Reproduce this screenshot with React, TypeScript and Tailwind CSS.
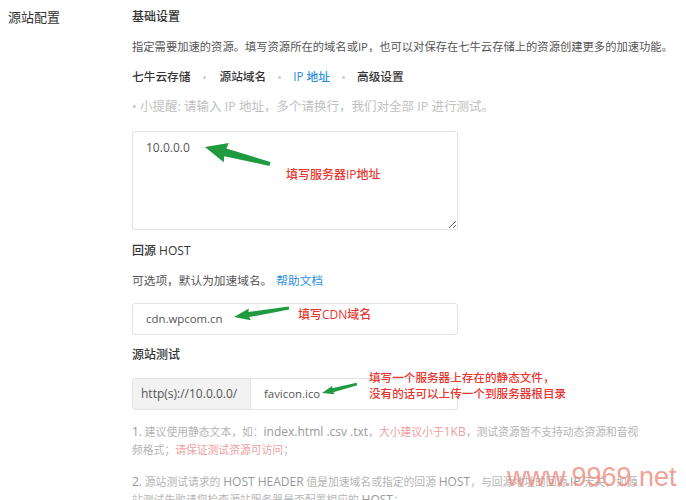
import React from "react";

const F = { fontFamily: '"Open Sans", "Noto Sans CJK SC", sans-serif' };

function Arrow({ tip, tail, headLen, headW, w0, w1 }: { tip: [number, number]; tail: [number, number]; headLen: number; headW: number; w0: number; w1: number }) {
  const dx = tail[0] - tip[0];
  const dy = tail[1] - tip[1];
  const L = Math.hypot(dx, dy);
  const ux = dx / L, uy = dy / L;
  const px = -uy, py = ux;
  const bx = tip[0] + ux * headLen, by = tip[1] + uy * headLen;
  const pts = [
    [tip[0], tip[1]],
    [bx + px * headW, by + py * headW],
    [bx + px * w0 - ux, by + py * w0 - uy],
    [tail[0] + px * w1, tail[1] + py * w1],
    [tail[0] - px * w1, tail[1] - py * w1],
    [bx - px * w0 - ux, by - py * w0 - uy],
    [bx - px * headW, by - py * headW],
  ];
  return <polygon points={pts.map((p) => p.join(",")).join(" ")} fill="#1f9a3e" />;
}

export default function App() {
  return (
    <div className="relative w-[686px] h-[500px] overflow-hidden bg-white flex items-start text-[#333]" style={F}>
      <div className="w-[132px] shrink-0 pl-[8px] pt-[5px] text-[13px] leading-[24px] text-[#333]">源站配置</div>
      <div className="flex-1 pt-[2px] pr-[4px]">
        <div className="h-[30px] flex items-center text-[12px] font-medium text-[#333]">基础设置</div>
        <div className="h-[30px] flex items-center text-[11.3px] text-[#555] whitespace-nowrap">指定需要加速的资源。填写资源所在的域名或IP，也可以对保存在七牛云存储上的资源创建更多的加速功能。</div>
        <div className="h-[30px] flex items-center text-[11.7px] font-medium text-[#333]">
          <span>七牛云存储</span>
          <span className="mx-[13px] w-[3px] h-[3px] rounded-full bg-[#ccc]" />
          <span>源站域名</span>
          <span className="mx-[12px] w-[3px] h-[3px] rounded-full bg-[#ccc]" />
          <span className="text-[#2a8ee0]">IP 地址</span>
          <span className="mx-[12px] w-[3px] h-[3px] rounded-full bg-[#ccc]" />
          <span>高级设置</span>
        </div>
        <div className="h-[31px] flex items-center text-[12.5px] text-[#c0c0c0] whitespace-nowrap">• 小提醒: 请输入 IP 地址，多个请换行，我们对全部 IP 进行测试。</div>
        <textarea
          readOnly
          defaultValue="10.0.0.0"
          className="block mt-[8px] w-[326px] h-[99px] border border-[#e3e3e3] rounded-[3px] px-[13px] pt-[7px] text-[12px] leading-[18px] text-[#555] outline-none"
          style={F}
        />
        <div className="mt-[6px] h-[30px] flex items-center text-[12px] font-medium text-[#333]">回源 HOST</div>
        <div className="h-[30px] flex items-center text-[11.7px] text-[#555]">
          可选项，默认为加速域名。<span className="ml-[4px] text-[#2a8ee0]">帮助文档</span>
        </div>
        <div className="mt-[7px] w-[326px] h-[32px] border border-[#e3e3e3] rounded-[3px] flex items-center px-[13px] text-[11.4px] text-[#555]">cdn.wpcom.cn</div>
        <div className="mt-[5px] h-[30px] flex items-center text-[12px] font-medium text-[#333]">源站测试</div>
        <div className="mt-[8px] w-[326px] h-[32px] flex border border-[#e3e3e3] rounded-[3px] overflow-hidden text-[12px] text-[#555]">
          <div className="w-[118px] bg-[#f2f2f2] border-r border-[#e3e3e3] flex items-center pl-[8px]">http(s)://10.0.0.0/</div>
          <div className="flex-1 flex items-center pl-[13px] text-[11.4px]">favicon.ico</div>
        </div>
        <div className="mt-[13px] text-[10.8px] leading-[18px] text-[#b5b5b5] whitespace-nowrap">
          <div><span className="text-[12px] text-[#999]">1.</span> 建议使用静态文本，如：<span className="text-[12px] text-[#999]">index.html .csv .txt</span>，<span className="text-[#eea0a0]">大小建议小于<span className="text-[12px]">1KB</span></span>，测试资源暂不支持动态资源和音视</div>
          <div>频格式；<span className="text-[#eea0a0]">请保证测试资源可访问</span>；</div>
        </div>
        <div className="mt-[14px] text-[10.8px] leading-[18px] text-[#b5b5b5] whitespace-nowrap">
          <div><span className="text-[12px] text-[#999]">2.</span> 源站测试请求的 <span className="text-[12px] text-[#999]">HOST HEADER</span> 值是加速域名或指定的回源 <span className="text-[12px] text-[#999]">HOST</span>，与回源地址的回源 <span className="text-[12px] text-[#999]">IP</span> 无关，如源</div>
          <div>站测试失败请您检查源站服务器是否配置相应的 <span className="text-[12px] text-[#999]">HOST</span>；</div>
        </div>
      </div>

      <svg className="absolute left-0 top-0 pointer-events-none" width="686" height="500">
        <Arrow tip={[205, 147]} tail={[270, 164]} headLen={22} headW={10} w0={4} w1={2} />
        <Arrow tip={[234, 317]} tail={[289, 308]} headLen={16} headW={6} w0={2.5} w1={1.5} />
        <Arrow tip={[322, 393]} tail={[357, 384]} headLen={12} headW={4.5} w0={2} w1={1.2} />
      </svg>
      <span className="absolute left-[286px] top-[166px] text-[12px] font-medium text-[#e8352f]">填写服务器IP地址</span>
      <span className="absolute left-[298px] top-[306px] text-[12px] font-medium text-[#e8352f]">填写CDN域名</span>
      <div className="absolute left-[369px] top-[370px] text-[11.6px] font-medium leading-[16px] text-[#e8352f]">
        <div>填写一个服务器上存在的静态文件，</div>
        <div>没有的话可以上传一个到服务器根目录</div>
      </div>
      <span
        className="absolute left-[507px] top-[460px] text-[27px] leading-[34px] text-[#f08a7e] opacity-80"
        style={{ fontFamily: '"Liberation Sans", sans-serif' }}
      >
        www.9969.net
      </span>
    </div>
  );
}
